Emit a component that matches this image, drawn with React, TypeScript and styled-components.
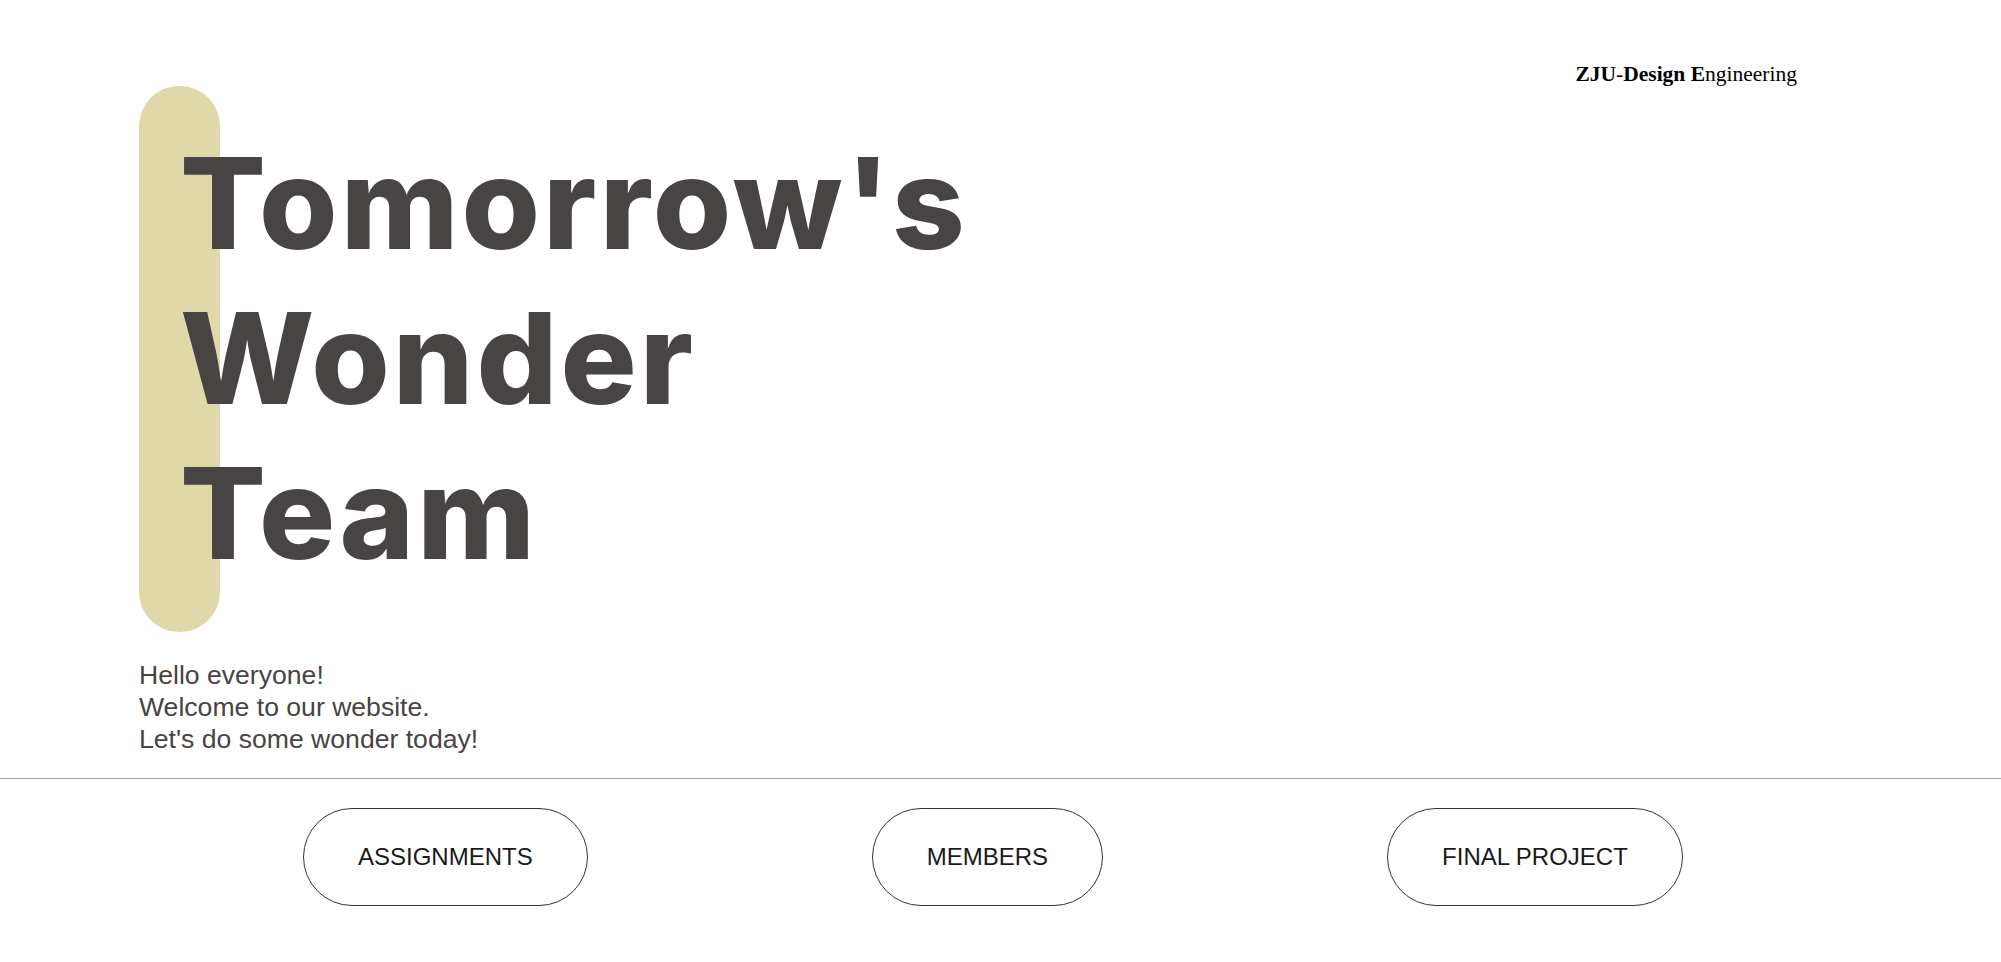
import React from "react";
import styled, { createGlobalStyle } from "styled-components";

const GlobalStyle = createGlobalStyle`
  html, body {
    margin: 0;
    padding: 0;
    background: #ffffff;
  }
  body {
    font-family: "Liberation Sans", Arial, sans-serif;
  }
`;

const Page = styled.div`
  display: flex;
  flex-direction: column;
  padding-top: 62px;
  min-height: 962px;
  box-sizing: border-box;
`;

const Header = styled.header`
  display: flex;
  justify-content: flex-end;
  padding-right: 204px;
  height: 24px;
`;

const Brand = styled.div`
  font-family: "Liberation Serif", "Times New Roman", serif;
  font-size: 21.5px;
  line-height: normal;
  color: #000;
  white-space: nowrap;
`;

const Strong = styled.b`
  font-weight: 700;
`;

const Hero = styled.section`
  display: grid;
  grid-template-columns: auto;
  justify-content: start;
  padding-left: 139px;
`;

const Pill = styled.div`
  grid-area: 1 / 1;
  width: 81px;
  height: 546px;
  border-radius: 40px;
  background: #dfd8a9;
`;

const Title = styled.h1`
  grid-area: 1 / 1;
  margin: 40px 0 0 41px;
  font-family: Inter, "Liberation Sans", sans-serif;
  font-weight: 800;
  font-size: 127px;
  line-height: 155px;
  letter-spacing: 3px;
  color: #484443;
  white-space: nowrap;
  position: relative;
`;

const Intro = styled.p`
  margin: 27px 0 0 139px;
  font-family: "Liberation Sans", Arial, sans-serif;
  font-size: 26.6px;
  line-height: 32px;
  color: #484443;
`;

const Divider = styled.hr`
  margin: 23px 0 0 0;
  border: none;
  border-top: 1px solid #a8a8a8;
  height: 0;
`;

const Nav = styled.nav`
  display: flex;
  gap: 284px;
  padding: 29px 0 0 303px;
`;

const NavButton = styled.a`
  display: inline-block;
  padding: 34px 54px;
  border: 1px solid #333;
  border-radius: 50px;
  font-family: "Liberation Sans", Arial, sans-serif;
  font-size: 24px;
  line-height: 28px;
  color: #1a1a1a;
  text-decoration: none;
  white-space: nowrap;
`;

export default function App() {
  return (
    <>
      <GlobalStyle />
      <Page>
        <Header>
          <Brand>
            <Strong>ZJU</Strong>-<Strong>Design</Strong> <Strong>E</Strong>ngineering
          </Brand>
        </Header>
        <Hero>
          <Pill />
          <Title>
            Tomorrow's
            <br />
            Wonder
            <br />
            Team
          </Title>
        </Hero>
        <Intro>
          Hello everyone!
          <br />
          Welcome to our website.
          <br />
          Let's do some wonder today!
        </Intro>
        <Divider />
        <Nav>
          <NavButton href="#">ASSIGNMENTS</NavButton>
          <NavButton href="#">MEMBERS</NavButton>
          <NavButton href="#">FINAL PROJECT</NavButton>
        </Nav>
      </Page>
    </>
  );
}
